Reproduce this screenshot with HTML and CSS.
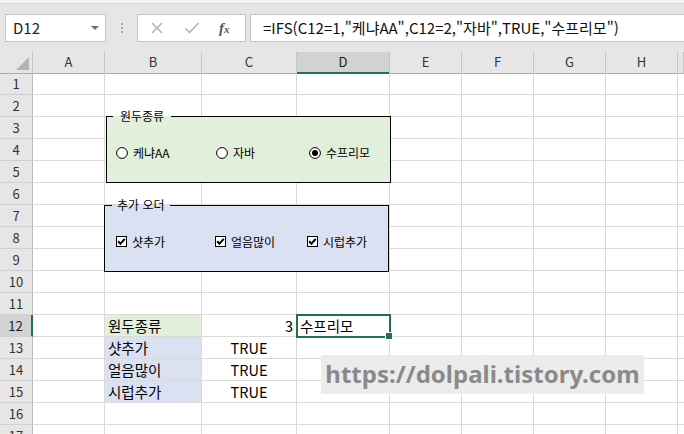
FILE: index.html
```html
<!DOCTYPE html>
<html lang="ko">

<head>
    <meta charset="utf-8">
    <meta name="viewport" content="width=device-width, initial-scale=1.0">
    <title>IFS 수식</title>
    <link rel="stylesheet" href="styles.css">
</head>

<body>
    <header>
        <div class="ribbon-edge"></div>
        <div class="formula-bar">
            <div class="name-box">D12<span class="arrow"></span></div>
            <div class="grip"><i></i><i></i><i></i></div>
            <div class="fx-box">
                <svg class="fx-icon" width="14" height="14" viewBox="0 0 14 14"><path d="M2 2L12 12M12 2L2 12" stroke="#b4b4b4" stroke-width="1.6" fill="none"/></svg>
                <svg class="fx-icon" width="16" height="14" viewBox="0 0 16 14"><path d="M1.5 7.5L5.5 11.5L14.5 2" stroke="#b4b4b4" stroke-width="1.6" fill="none"/></svg>
                <span class="fx">f<sub>x</sub></span>
            </div>
            <div class="formula">=IFS(C12=1,"케냐AA",C12=2,"자바",TRUE,"수프리모")</div>
        </div>
    </header>

    <main class="sheet">
        <div class="row head">
            <div class="corner"><span></span></div>
            <div class="ch">A</div><div class="ch">B</div><div class="ch">C</div><div class="ch sel">D</div>
            <div class="ch">E</div><div class="ch">F</div><div class="ch">G</div><div class="ch">H</div><div class="ch"></div>
        </div>
        <div class="row"><div class="rh">1</div><div class="c"></div><div class="c"></div><div class="c"></div><div class="c"></div><div class="c"></div><div class="c"></div><div class="c"></div><div class="c"></div><div class="c"></div></div>
        <div class="row"><div class="rh">2</div><div class="c"></div><div class="c"></div><div class="c"></div><div class="c"></div><div class="c"></div><div class="c"></div><div class="c"></div><div class="c"></div><div class="c"></div></div>
        <div class="row"><div class="rh">3</div><div class="c"></div><div class="c"></div><div class="c"></div><div class="c"></div><div class="c"></div><div class="c"></div><div class="c"></div><div class="c"></div><div class="c"></div></div>
        <div class="row"><div class="rh">4</div><div class="c"></div><div class="c"></div><div class="c"></div><div class="c"></div><div class="c"></div><div class="c"></div><div class="c"></div><div class="c"></div><div class="c"></div></div>
        <div class="row"><div class="rh">5</div><div class="c"></div><div class="c"></div><div class="c"></div><div class="c"></div><div class="c"></div><div class="c"></div><div class="c"></div><div class="c"></div><div class="c"></div></div>
        <div class="row"><div class="rh">6</div><div class="c"></div><div class="c"></div><div class="c"></div><div class="c"></div><div class="c"></div><div class="c"></div><div class="c"></div><div class="c"></div><div class="c"></div></div>
        <div class="row"><div class="rh">7</div><div class="c"></div><div class="c"></div><div class="c"></div><div class="c"></div><div class="c"></div><div class="c"></div><div class="c"></div><div class="c"></div><div class="c"></div></div>
        <div class="row"><div class="rh">8</div><div class="c"></div><div class="c"></div><div class="c"></div><div class="c"></div><div class="c"></div><div class="c"></div><div class="c"></div><div class="c"></div><div class="c"></div></div>
        <div class="row"><div class="rh">9</div><div class="c"></div><div class="c"></div><div class="c"></div><div class="c"></div><div class="c"></div><div class="c"></div><div class="c"></div><div class="c"></div><div class="c"></div></div>
        <div class="row"><div class="rh">10</div><div class="c"></div><div class="c"></div><div class="c"></div><div class="c"></div><div class="c"></div><div class="c"></div><div class="c"></div><div class="c"></div><div class="c"></div></div>
        <div class="row"><div class="rh">11</div><div class="c"></div><div class="c"></div><div class="c"></div><div class="c"></div><div class="c"></div><div class="c"></div><div class="c"></div><div class="c"></div><div class="c"></div></div>
        <div class="row"><div class="rh sel">12</div><div class="c"></div><div class="c green">원두종류</div><div class="c num">3</div><div class="c active">수프리모</div><div class="c"></div><div class="c"></div><div class="c"></div><div class="c"></div><div class="c"></div></div>
        <div class="row"><div class="rh">13</div><div class="c"></div><div class="c blue">샷추가</div><div class="c bool">TRUE</div><div class="c"></div><div class="c"></div><div class="c"></div><div class="c"></div><div class="c"></div><div class="c"></div></div>
        <div class="row"><div class="rh">14</div><div class="c"></div><div class="c blue">얼음많이</div><div class="c bool">TRUE</div><div class="c"></div><div class="c"></div><div class="c"></div><div class="c"></div><div class="c"></div><div class="c"></div></div>
        <div class="row"><div class="rh">15</div><div class="c"></div><div class="c blue">시럽추가</div><div class="c bool">TRUE</div><div class="c"></div><div class="c"></div><div class="c"></div><div class="c"></div><div class="c"></div><div class="c"></div></div>
        <div class="row"><div class="rh">16</div><div class="c"></div><div class="c"></div><div class="c"></div><div class="c"></div><div class="c"></div><div class="c"></div><div class="c"></div><div class="c"></div><div class="c"></div></div>
        <div class="row"><div class="rh">17</div><div class="c"></div><div class="c"></div><div class="c"></div><div class="c"></div><div class="c"></div><div class="c"></div><div class="c"></div><div class="c"></div><div class="c"></div></div>

        <!-- 양식 컨트롤 (시트 위에 떠 있음) -->
        <fieldset class="group bean">
            <legend>원두종류</legend>
            <div class="options">
                <label class="opt"><svg width="12" height="12" viewBox="0 0 12 12"><circle cx="6" cy="6" r="5.4" fill="#fff" stroke="#000"/></svg>케냐AA</label>
                <label class="opt"><svg width="12" height="12" viewBox="0 0 12 12"><circle cx="6" cy="6" r="5.4" fill="#fff" stroke="#000"/></svg>자바</label>
                <label class="opt"><svg width="12" height="12" viewBox="0 0 12 12"><circle cx="6" cy="6" r="5.4" fill="#fff" stroke="#000"/><circle cx="6" cy="6" r="3" fill="#000"/></svg>수프리모</label>
            </div>
        </fieldset>

        <fieldset class="group order">
            <legend>추가 오더</legend>
            <div class="options">
                <label class="opt"><svg width="11" height="11" viewBox="0 0 11 11"><rect x="0.5" y="0.5" width="10" height="10" fill="#fff" stroke="#000"/><path d="M2.2 5.3L4.4 7.7L8.8 2.9" stroke="#000" stroke-width="2" fill="none"/></svg>샷추가</label>
                <label class="opt"><svg width="11" height="11" viewBox="0 0 11 11"><rect x="0.5" y="0.5" width="10" height="10" fill="#fff" stroke="#000"/><path d="M2.2 5.3L4.4 7.7L8.8 2.9" stroke="#000" stroke-width="2" fill="none"/></svg>얼음많이</label>
                <label class="opt"><svg width="11" height="11" viewBox="0 0 11 11"><rect x="0.5" y="0.5" width="10" height="10" fill="#fff" stroke="#000"/><path d="M2.2 5.3L4.4 7.7L8.8 2.9" stroke="#000" stroke-width="2" fill="none"/></svg>시럽추가</label>
            </div>
        </fieldset>

        <div class="watermark">https://dolpali.tistory.com</div>
    </main>
</body>

</html>
```

FILE: styles.css
```css
*,
body * {
    box-sizing: border-box;
}

body {
    margin: 0;
    padding: 0;
    background: #e6e6e6;
    font-family: "Noto Sans CJK KR", "Noto Sans", sans-serif;
    color: #000;
    overflow: hidden;
}

/* 상단 수식 입력줄 */
.ribbon-edge {
    height: 4px;
    background: #f3f3f3;
    border-bottom: 1px solid #d5d5d5;
}

.formula-bar {
    display: flex;
    align-items: center;
    height: 48px;
    padding: 10px 0 10px 5px;
}

.name-box {
    position: relative;
    width: 101px;
    height: 28px;
    background: #fff;
    border: 1px solid #c6c6c6;
    font-size: 15px;
    line-height: 26px;
    padding-left: 7px;
    color: #222;
}

.arrow {
    position: absolute;
    right: 6px;
    top: 11px;
    border-left: 4px solid transparent;
    border-right: 4px solid transparent;
    border-top: 4px solid #6f6f6f;
}

.grip {
    display: flex;
    flex-direction: column;
    gap: 2px;
    margin: 0 14px 0 15px;
}

.grip i {
    display: block;
    width: 2px;
    height: 2px;
    background: #a6a6a6;
}

.fx-box {
    display: flex;
    align-items: center;
    width: 109px;
    height: 28px;
    background: #fff;
    border: 1px solid #c6c6c6;
    padding-left: 12px;
    gap: 20px;
}

.fx {
    font-family: "Liberation Serif", serif;
    font-style: italic;
    font-weight: bold;
    font-size: 15px;
    color: #555;
    margin-left: -1px;
}

.fx sub {
    font-size: 11px;
    vertical-align: 0;
}

.formula {
    flex: 1;
    height: 28px;
    margin-left: 4px;
    background: #fff;
    border: 1px solid #c6c6c6;
    border-right: none;
    padding-left: 12px;
    font-size: 15px;
    line-height: 26px;
    white-space: nowrap;
    color: #111;
}

/* 시트 */
.sheet {
    position: relative;
    background: #fff;
}

.row {
    display: grid;
    grid-template-columns: 33px 72px 97px 95px 93px 72px 72px 72px 72px 1fr;
    height: 22px;
}

.row.head {
    height: 21px;
    background: #e6e6e6;
}

.c {
    border-right: 1px solid #dadada;
    border-bottom: 1px solid #dadada;
    font-size: 14.5px;
    line-height: 21px;
    padding: 0 3px;
    white-space: nowrap;
}

.rh {
    background: #e6e6e6;
    border-right: 1px solid #bdbdbd;
    border-bottom: 1px solid #d0d0d0;
    font-size: 13px;
    line-height: 21px;
    text-align: center;
    color: #333;
}

.ch {
    border-right: 1px solid #c4c4c4;
    border-bottom: 1px solid #ababab;
    font-size: 13px;
    line-height: 20px;
    text-align: center;
    color: #333;
}

.corner {
    position: relative;
    border-right: 1px solid #c4c4c4;
    border-bottom: 1px solid #ababab;
}

.corner span {
    position: absolute;
    right: 3px;
    bottom: 3px;
    border-left: 13px solid transparent;
    border-bottom: 13px solid #b4b4b4;
}

.ch.sel {
    background: #d2d2d2;
    border-bottom: 2px solid #217346;
    color: #1d1d1d;
}

.rh.sel {
    background: #d2d2d2;
    border-right: 2px solid #217346;
    color: #1d1d1d;
}

.green {
    background: #e2efda;
}

.blue {
    background: #d9e1f2;
}

.num {
    text-align: right;
    padding-right: 3px;
}

.bool {
    text-align: center;
}

.active {
    position: relative;
    outline: 2px solid #217346;
    outline-offset: -1px;
    z-index: 1;
}

.active::after {
    content: "";
    position: absolute;
    right: -4px;
    bottom: -4px;
    width: 6px;
    height: 6px;
    background: #217346;
    border: 1px solid #fff;
}

/* 그룹 상자 */
.group {
    position: absolute;
    margin: 0;
    width: 285px;
    height: 74px;
    border: 1px solid #000;
    padding: 0;
    font-size: 12px;
    z-index: 2;
}

.group legend {
    line-height: 14px;
    padding: 0 7px;
}

.bean {
    left: 106px;
    top: 57px;
    background: #e2efda;
    padding-left: 6px;
}

.order {
    left: 104px;
    top: 146px;
    background: #d9e1f2;
    padding-left: 7px;
}

.order legend {
    padding: 0 5px;
}

.options {
    display: grid;
    margin-top: 21px;
    height: 16px;
    align-items: center;
}

.bean .options {
    grid-template-columns: 100px 93px auto;
    margin-left: 3px;
}

.order .options {
    grid-template-columns: 99px 92px auto;
    margin-left: 4px;
}

.opt {
    display: flex;
    align-items: center;
    gap: 5px;
    white-space: nowrap;
}

.watermark {
    position: absolute;
    left: 321px;
    top: 303px;
    width: 323px;
    height: 39px;
    background: #ececec;
    color: #8a8a8a;
    font-family: "Noto Sans", sans-serif;
    font-weight: bold;
    font-size: 24px;
    line-height: 37px;
    text-align: center;
    white-space: nowrap;
    z-index: 2;
}
```
